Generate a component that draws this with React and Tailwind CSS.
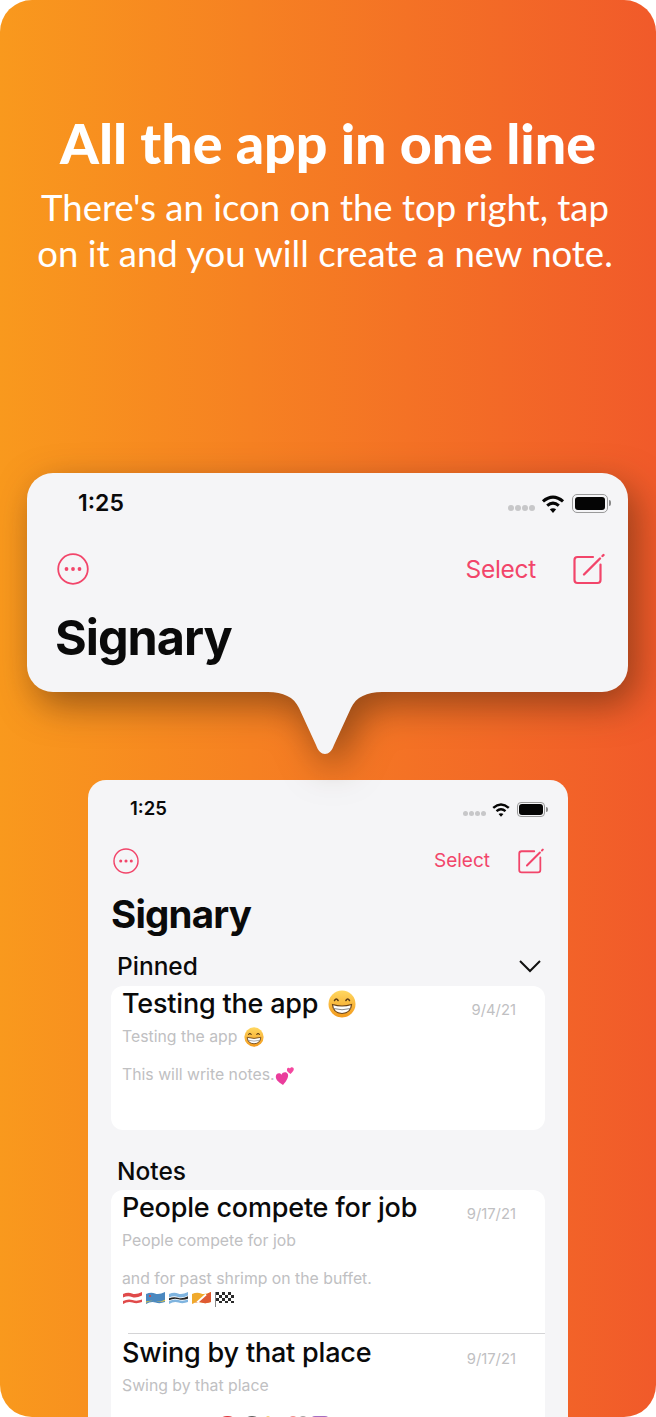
const inter = { fontFamily: "Inter, sans-serif" };

function Grin({ size, id }) {
  return (
    <svg width={size} height={size} viewBox="0 0 28 28" className="shrink-0">
      <defs>
        <linearGradient id={id} x1="0" y1="0" x2="0" y2="1">
          <stop offset="0" stopColor="#ffd861" />
          <stop offset="1" stopColor="#f39a1c" />
        </linearGradient>
      </defs>
      <circle cx="14" cy="14" r="13.5" fill={`url(#${id})`} />
      <path d="M6.5 10.5q1.8-3 3.6 0M17.9 10.5q1.8-3 3.6 0" fill="none" stroke="#5a3a14" strokeWidth="1.5" strokeLinecap="round" />
      <path d="M4.5 14.5q9.5 3 19 0q-.5 8.5-9.500 9q-9-.5-9.500-9z" fill="#fff" stroke="#6b4316" strokeWidth="1.200" />
      <path d="M5.500 18.500q8.500 2.500 17 0" fill="none" stroke="#8a8a8a" strokeWidth="1" />
    </svg>
  );
}

function Hearts() {
  return (
    <svg width="21" height="21" viewBox="0 0 21 21" className="shrink-0">
      <path d="M8 20C3 17 0 14 1 10.500c.8-2.700 4-3 5.500-.8C7.500 7 11 6.500 12.500 8.500c1.800 2.500-.5 7-4.500 11.500z" fill="#ea3c9c" />
      <path d="M15.500 9c-2.500-1.500-4-3-3.500-5 .4-1.500 2.200-1.700 3-.5.600-1.500 2.600-1.800 3.500-.6 1 1.500-.4 3.700-3 6.100z" fill="#f4479f" />
    </svg>
  );
}

// waving flag outline shared by the flag emoji
const wave = "M0 3q5-2 9-.5t10-1.500v10q-5 2-9.500.5T0 13z";

function Flag({ id, children }) {
  return (
    <svg width="19" height="15" viewBox="0 0 19 15" className="shrink-0">
      <clipPath id={id}>
        <path d={wave} />
      </clipPath>
      <g clipPath={`url(#${id})`}>{children}</g>
    </svg>
  );
}

function Flags() {
  return (
    <div className="flex gap-[4px] h-[15px] items-center pl-[1px]">
      <Flag id="flag-at">
        <rect width="19" height="15" fill="#e04a4a" />
        <path d="M0 6.500q5-2 9-.5t10-1.500v4q-5 2-9.500.5T0 10z" fill="#fff" />
      </Flag>
      <Flag id="flag-aw">
        <rect width="19" height="15" fill="#4a88c0" />
        <path d="M0 10.500q5-1.500 9-.3t10-1.500v1.200q-5 1.600-10 .4T0 11.800z" fill="#e8c93c" />
        <circle cx="4" cy="5" r="1.100" fill="#d8403c" />
      </Flag>
      <Flag id="flag-bw">
        <rect width="19" height="15" fill="#7fb4df" />
        <path d="M0 6.500q5-2 9-.5t10-1.500v4q-5 2-9.500.5T0 10z" fill="#fff" />
        <path d="M0 7.300q5-2 9-.5t10-1.500v2.400q-5 2-9.500.5T0 9.200z" fill="#222" />
      </Flag>
      <Flag id="flag-bt">
        <rect width="19" height="15" fill="#f0a92c" />
        <path d="M0 14L19 0v15H0z" fill="#df5a33" />
        <path d="M5 11.500l9-8" stroke="#fff" strokeWidth="1.800" />
      </Flag>
      <svg width="19" height="16" viewBox="0 0 19 16" className="shrink-0">
        <rect x="1" y="1" width="18" height="11" fill="#fff" />
        <path d="M1 1h3v3H1zM7 1h3v3H7zM13 1h3v3h-3zM4 4h3v3H4zM10 4h3v3h-3zM16 4h3v3h-3zM1 7h3v3H1zM7 7h3v3H7zM13 7h3v3h-3zM4 10h3v2H4zM10 10h3v2h-3zM16 10h3v2h-3z" fill="#2b2b2b" />
        <rect x="0" y="1" width="1" height="15" fill="#888" />
      </svg>
    </div>
  );
}

function CutOffEmoji() {
  return (
    <div className="flex items-start h-[20px] mt-[4px] pl-[95px]">
      <span className="w-[21px] h-[20px] rounded-full bg-[#e03a3e]" />
      <span className="ml-[4px] w-[20px] h-[20px] rounded-full bg-[#5e5e5e]" />
      <span className="ml-[4px] w-[4px] h-[20px] rounded-t-full bg-[#f3d27a]" />
      <span className="ml-[18px] w-[10px] h-[20px] rounded-t-full bg-[#ef8f8c]" />
      <span className="w-[10px] h-[20px] rounded-t-full bg-[#a8a2a2]" />
      <span className="ml-[2px] w-[20px] h-[20px] rounded-[5px] bg-[#a56ec0]" />
    </div>
  );
}

function StatusIcons({ big }) {
  const dot = big ? "w-[6px] h-[6px] rounded-full bg-[#c7c7c9]" : "w-[5px] h-[5px] rounded-full bg-[#c7c7c9]";
  return (
    <div className="flex items-center gap-[6px]">
      <div className="flex gap-[1px] mt-[9px]">
        <span className={dot} />
        <span className={dot} />
        <span className={dot} />
        <span className={dot} />
      </div>
      <svg width={big ? 24 : 18} height={big ? 19 : 15} viewBox="0 0 22 18" fill="none" stroke="#050505" strokeWidth="3">
        <path d="M1.500 7q9.500-8 19 0" />
        <path d="M5.500 11q5.500-4.500 11 0" />
        <path d="M8 14.500L11 18l3-3.500q-3-2-6 0z" fill="#050505" stroke="none" />
      </svg>
      <div className="flex items-center gap-[1px] ml-[1px]">
        <div className={big ? "w-[36px] h-[19px] rounded-[5px] border border-[#9a9a9a] p-[2px]" : "w-[28px] h-[15px] rounded-[4px] border border-[#9a9a9a] p-[1px]"}>
          <div className="w-full h-full rounded-[3px] bg-[#050505]" />
        </div>
        <div className={big ? "w-[2px] h-[6px] rounded-r-full bg-[#8a8a8a]" : "w-[2px] h-[5px] rounded-r-full bg-[#8a8a8a]"} />
      </div>
    </div>
  );
}

function MoreIcon({ size }) {
  return (
    <svg width={size} height={size} viewBox="0 0 32 32" fill="none">
      <circle cx="16" cy="16" r="14.800" stroke="#f2456a" strokeWidth="1.800" />
      <circle cx="9.500" cy="16" r="1.900" fill="#f2456a" />
      <circle cx="16" cy="16" r="1.900" fill="#f2456a" />
      <circle cx="22.500" cy="16" r="1.900" fill="#f2456a" />
    </svg>
  );
}

function ComposeIcon({ size }) {
  return (
    <svg width={size} height={size} viewBox="0 0 32 32" fill="none" stroke="#f2456a" strokeLinecap="round">
      <path d="M27.500 11.500V27a3 3 0 0 1-3 3H4.500a3 3 0 0 1-3-3V7a3 3 0 0 1 3-3H20" strokeWidth="2.200" />
      <path d="M11 21.500L27 5.500" strokeWidth="2.400" />
      <path d="M29.500 3L30.500 2" strokeWidth="2.400" />
    </svg>
  );
}

function Note({ title, date, grin, line1, children, className }) {
  return (
    <div className={className}>
      <div className="flex justify-between">
        <div className="flex items-center gap-[10px] h-[36px] text-[27px] leading-[36px] font-[450] text-[#0a0a0a] tracking-[-0.2px]">
          {title}
          {grin && <Grin size={28} id="grin-big" />}
        </div>
        <div className="mt-[14px] mr-[29px] text-[14.800px] leading-[20px] text-[#c0c0c2]">{date}</div>
      </div>
      <div className="mt-[3px] flex items-center gap-[7px] h-[24px] text-[15.800px] leading-[24px] text-[#c0c0c2]">
        {line1}
        {grin && <Grin size={20} id="grin-small" />}
      </div>
      <div className="mt-[14px] text-[15.800px] leading-[24px] text-[#c0c0c2] flex items-center">{children}</div>
    </div>
  );
}

export default function App() {
  return (
    <div className="bg-white w-[656px] h-[1417px] overflow-hidden">
      <div className="relative h-full overflow-hidden rounded-[32px] bg-linear-to-r/srgb from-[#f9991d] to-[#f15a2a]" style={inter}>
        <div className="pt-[113px] text-center text-white" style={{ fontFamily: "Lato, sans-serif" }}>
          <h1 className="text-[55.500px] leading-[60px] font-black">All the app in one line</h1>
          <p className="mt-[11px] pr-[6px] text-[36.500px] leading-[46px]">
            There's an icon on the top right, tap
            <br />
            on it and you will create a new note.
          </p>
        </div>

        <div className="relative z-10 mt-[197px] ml-[27px] mr-[28px] drop-shadow-[8px_13px_18px_rgba(60,30,10,0.5)]">
          <div className="h-[219px] rounded-[26px] bg-[#f5f5f7] pt-[16px] pl-[30px] pr-[23px]">
            <div className="flex justify-between items-center h-[28px]">
              <span className="pl-[21px] text-[23px] font-semibold text-[#0a0a0a]">1:25</span>
              <div className="-mr-[6px]"><StatusIcons big /></div>
            </div>
            <div className="mt-[35px] flex justify-between items-center h-[34px]">
              <MoreIcon size={32} />
              <div className="flex items-center gap-[37px]">
                <span className="text-[24.500px] text-[#f2456a] tracking-[-0.3px]">Select</span>
                <ComposeIcon size={32} />
              </div>
            </div>
            <div className="-ml-[2px] mt-[22px] text-[48.500px] leading-[60px] font-bold text-[#0a0a0a] tracking-[-1px]">Signary</div>
          </div>
          <svg width="114" height="66" viewBox="0 0 114 66" className="absolute left-[241px] top-[218px]" fill="#f5f5f7">
            <path d="M0 0h114v1C99 1 88 6 83 17L66 54C62 66 52 66 48 54L31 17C26 6 15 1 0 1z" />
          </svg>
        </div>

        <div className="mt-[88px] mx-[88px] h-[700px] rounded-t-[18px] bg-[#f5f5f7] px-[23px] overflow-hidden">
          <div className="flex justify-between items-center h-[30px] pt-[14px] pl-[19px] box-content">
            <span className="text-[18.500px] font-semibold text-[#0a0a0a]">1:25</span>
            <div className="-mr-[3px]"><StatusIcons /></div>
          </div>
          <div className="mt-[24px] flex justify-between items-center h-[26px] pl-[2px]">
            <MoreIcon size={26} />
            <div className="flex items-center gap-[28px] mr-[1px]">
              <span className="text-[19px] text-[#f2456a]">Select</span>
              <ComposeIcon size={26} />
            </div>
          </div>
          <div className="mt-[16px] text-[38.500px] leading-[48px] font-bold text-[#0a0a0a] tracking-[-0.8px]">Signary</div>

          <div className="mt-[15px] flex justify-between items-center h-[26px] pl-[6px]">
            <span className="text-[24.500px] font-medium text-[#0a0a0a]">Pinned</span>
            <svg width="24" height="16" viewBox="0 0 24 16" fill="none" stroke="#111" strokeWidth="2" className="mr-[3px]">
              <path d="M2 3l10 10L22 3" />
            </svg>
          </div>
          <div className="mt-[7px] h-[144px] rounded-[12px] bg-white pl-[11px]">
            <Note title="Testing the app" date="9/4/21" grin line1="Testing the app">
              This will write notes.
              <Hearts />
            </Note>
          </div>

          <div className="mt-[28px] h-[26px] pl-[6px] text-[24.500px] leading-[26px] font-medium text-[#0a0a0a]">Notes</div>
          <div className="mt-[6px] h-[300px] rounded-[12px] bg-white pl-[11px]">
            <Note title="People compete for job" date="9/17/21" line1="People compete for job">
              and for past shrimp on the buffet.
            </Note>
            <Flags />
            <div className="mt-[27px] ml-[6px] h-px bg-[#d4d4d6]" />
            <Note className="mt-[1px]" title="Swing by that place" date="9/17/21" line1="Swing by that place">
              <CutOffEmoji />
            </Note>
          </div>
        </div>
      </div>
    </div>
  );
}
